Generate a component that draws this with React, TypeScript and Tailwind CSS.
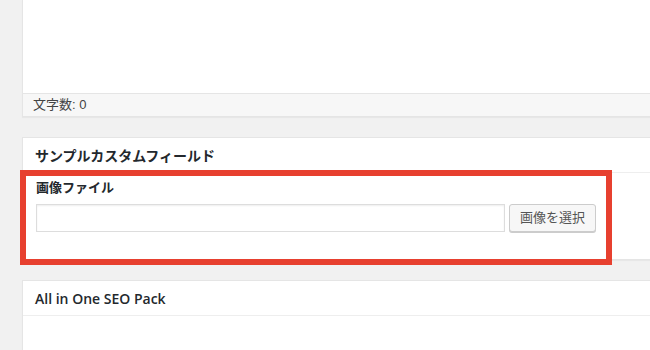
import React from 'react';

const jp = { fontFamily: '"Liberation Sans", "Noto Sans CJK JP", sans-serif' };
const head = { fontFamily: '"Open Sans", "Noto Sans CJK JP", sans-serif' };

function Postbox({ title, children }: { title: string; children?: React.ReactNode }) {
  return (
    <div className="w-[680px] border border-[#e5e5e5] bg-white shadow-[0_1px_1px_rgba(0,0,0,0.04)]">
      <h2
        className="flex h-[35px] items-center border-b border-[#eeeeee] px-[12px] text-[14px] font-semibold text-[#23282d]"
        style={head}
      >
        {title}
      </h2>
      {children}
    </div>
  );
}

export default function App() {
  return (
    <div className="relative h-[350px] w-[650px] overflow-hidden bg-[#f1f1f1]" style={jp}>
      <div className="flex flex-col gap-y-[20px] pl-[22px]">
        <div className="w-[680px] border-x border-b border-[#e5e5e5] bg-white shadow-[0_1px_1px_rgba(0,0,0,0.04)]">
          <div className="h-[93px]" />
          <div className="flex h-[23px] items-center border-t border-[#e5e5e5] bg-[#f7f7f7] px-[10px] text-[13px] text-[#444]">
            文字数: 0
          </div>
        </div>

        <Postbox title="サンプルカスタムフィールド">
          <div className="px-[13px] pb-[27px] pt-[5px]">
            <p className="mb-[6px] text-[13px] font-bold leading-[20px] text-[#23282d]">画像ファイル</p>
            <div className="flex items-center gap-x-[4px]">
              <input
                type="text"
                className="h-[28px] w-[469px] border border-[#dddddd] bg-white shadow-[inset_0_1px_2px_rgba(0,0,0,0.07)] outline-none"
              />
              <button className="h-[28px] rounded-[3px] border border-[#cccccc] bg-[#f7f7f7] px-[10px] text-[13px] text-[#555] shadow-[0_1px_0_#cccccc]">
                画像を選択
              </button>
            </div>
          </div>
        </Postbox>

        <Postbox title="All in One SEO Pack">
          <div className="h-[60px]" />
        </Postbox>
      </div>

      <div className="pointer-events-none absolute left-[20px] top-[170px] h-[95px] w-[592px] border-[6px] border-[#e7402f]" />
    </div>
  );
}
